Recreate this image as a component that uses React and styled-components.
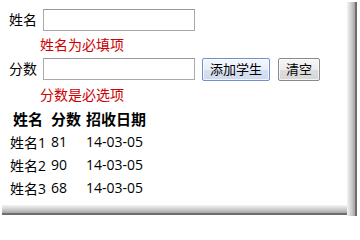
import React from 'react';
import styled, { createGlobalStyle } from 'styled-components';

const GlobalStyle = createGlobalStyle`
  html, body {
    margin: 0;
    padding: 0;
    background: #fff;
  }
  body {
    font-family: "Open Sans", "Noto Sans CJK SC", sans-serif;
    font-size: 14px;
    color: #000;
  }
`;

// screenshot frame: soft drop shadow on the right and bottom edge
const Frame = styled.div`
  width: 360px;
  height: 219px;
  overflow: hidden;
  background-color: #fff;
  background-repeat: no-repeat;
  background-image:
    linear-gradient(to right, #f4f4f4 0%, #c8c8c8 45%, #a8a8a8 70%, #6e6e6e 72%, #6e6e6e 88%, #fff 88%),
    linear-gradient(to bottom, #f4f4f4 0%, #c8c8c8 45%, #a8a8a8 70%, #6e6e6e 72%, #6e6e6e 88%, #fff 88%);
  background-position: 347px 2px, 2px 205px;
  background-size: 11px 214px, 345px 11px;
`;

const Panel = styled.div`
  width: 347px;
  height: 205px;
  box-sizing: border-box;
  padding: 9px 0 0 9px;
  background: #fff;
`;

const Row = styled.div`
  display: flex;
  align-items: center;
  height: 22px;
`;

const Label = styled.label`
  width: 28px;
  margin-right: 6px;
  line-height: 22px;
  white-space: nowrap;
`;

const Input = styled.input`
  width: 152px;
  height: 22px;
  box-sizing: border-box;
  margin: 0;
  padding: 0 3px;
  border: 1px solid #a9a9a9;
  border-top-color: #9a9a9a;
  background: #fff;
  font: inherit;
  outline: none;
`;

const Button = styled.button`
  height: 23px;
  box-sizing: border-box;
  margin: 0 0 0 ${(p) => p.$gap}px;
  padding: 0 7px;
  font-family: "Open Sans", "Noto Sans CJK SC", sans-serif;
  font-size: 13px;
  line-height: 21px;
  color: #000;
  border: 1px solid ${(p) => (p.$primary ? '#6f8fcf' : '#8a8a8a')};
  border-radius: 2px;
  background: ${(p) =>
    p.$primary
      ? 'linear-gradient(#f4f7fc 0%, #e8eef8 50%, #d9e2f2 51%, #cfd9ee 100%)'
      : 'linear-gradient(#f6f6f6 0%, #ececec 50%, #dedede 51%, #d6d6d6 100%)'};
  box-shadow: inset 0 0 0 1px rgba(255, 255, 255, 0.7);
  cursor: pointer;
`;

const Error = styled.div`
  color: #cc0000;
  padding-left: 31px;
  padding-top: ${(p) => p.$top}px;
  line-height: ${(p) => p.$lh}px;
  white-space: nowrap;
`;

const Table = styled.table`
  border-collapse: separate;
  border-spacing: 0;
`;

const Th = styled.th`
  height: 23px;
  padding: 0 4px 0 1px;
  font-size: 15px;
  font-weight: bold;
  text-align: center;
  white-space: nowrap;
`;

const Td = styled.td`
  height: 23px;
  padding: 0 4px 0 1px;
  text-align: left;
  white-space: nowrap;
`;

const students = [
  { name: '姓名1', score: 81, date: '14-03-05' },
  { name: '姓名2', score: 90, date: '14-03-05' },
  { name: '姓名3', score: 68, date: '14-03-05' },
];

const App = () => {
  return (
    <Frame>
      <GlobalStyle />
      <Panel>
        <Row>
          <Label>姓名</Label>
          <Input type="text" />
        </Row>
        <Error $top={0} $lh={27}>姓名为必填项</Error>
        <Row>
          <Label>分数</Label>
          <Input type="text" />
          <Button $primary $gap={7}>添加学生</Button>
          <Button $gap={8}>清空</Button>
        </Row>
        <Error $top={3} $lh={24}>分数是必选项</Error>
        <Table>
          <thead>
            <tr>
              <Th>姓名</Th>
              <Th>分数</Th>
              <Th>招收日期</Th>
            </tr>
          </thead>
          <tbody>
            {students.map((s, idx) => (
              <tr key={idx}>
                <Td>{s.name}</Td>
                <Td>{s.score}</Td>
                <Td>{s.date}</Td>
              </tr>
            ))}
          </tbody>
        </Table>
      </Panel>
    </Frame>
  );
};

export default App;
